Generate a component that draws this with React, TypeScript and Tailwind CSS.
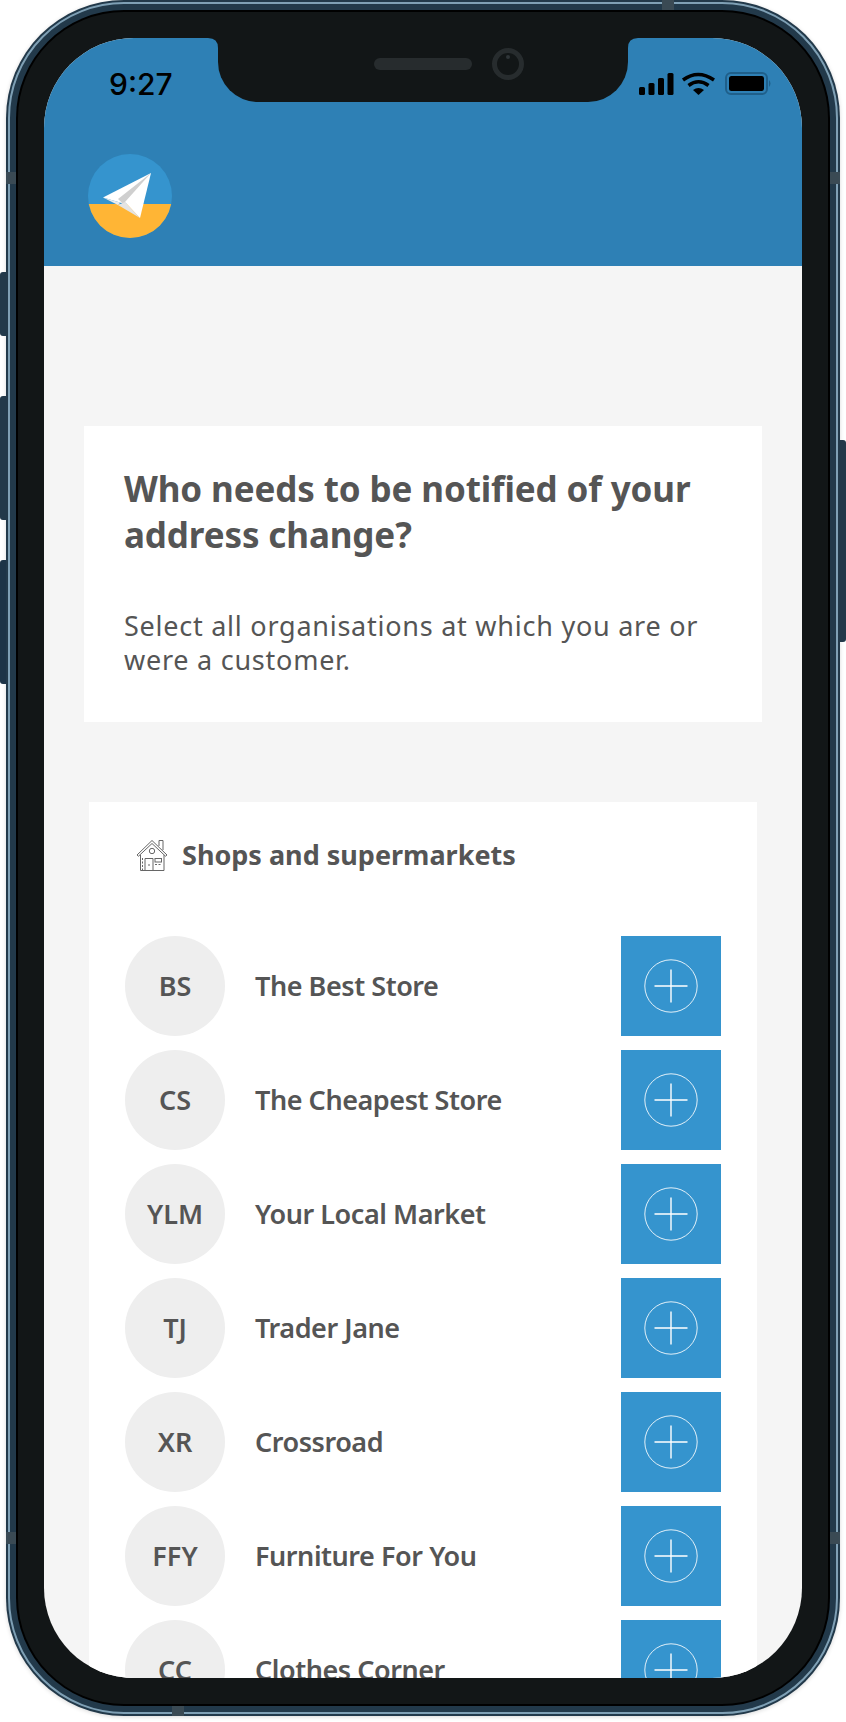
const rows = [
  ["BS", "The Best Store"],
  ["CS", "The Cheapest Store"],
  ["YLM", "Your Local Market"],
  ["TJ", "Trader Jane"],
  ["XR", "Crossroad"],
  ["FFY", "Furniture For You"],
  ["CC", "Clothes Corner"],
];

function Plus() {
  return (
    <svg width="56" height="56" viewBox="0 0 56 56" fill="none" stroke="#fff">
      <circle cx="28" cy="28" r="26.2" strokeWidth="1" opacity="0.85" />
      <path d="M28 11.5v33M11.5 28h33" strokeWidth="1.4" />
    </svg>
  );
}

function House() {
  return (
    <svg width="32" height="32" viewBox="0 0 32 32" fill="none" stroke="#666" strokeWidth="1">
      <path d="M1 16 16 1.5 31 16l-1.5 1.2L16 4.5 2.5 17.2Z" />
      <path d="M23 7V1.5h4V11" />
      <path d="M4.5 16v15.5h23.500V16" />
      <circle cx="16" cy="12" r="2.7" />
      <path d="M9 31.500V19.500h8v12M13 25v2" />
      <rect x="19" y="19.500" width="6.500" height="3.500" />
      <path d="M19 25.500h6.500M6.500 19v12" strokeDasharray="2 1.500" />
    </svg>
  );
}

function Logo() {
  return (
    <svg width="84" height="84" viewBox="0 0 84 84">
      <defs>
        <clipPath id="lg"><circle cx="42" cy="42" r="42" /></clipPath>
      </defs>
      <g clipPath="url(#lg)">
        <rect width="84" height="84" fill="#3594ce" />
        <rect y="50" width="84" height="34" fill="#ffb535" />
      </g>
      <path d="M63 19 15 43.500 37 50Z" fill="#fff" />
      <path d="M63 19 37 50l-22-6.500L30 51l4-4Z" fill="#ececec" />
      <path d="M63 19 30 45l7 6.500Z" fill="#cfcfcf" />
      <path d="M63 19 37 48l15 16Z" fill="#fff" />
      <path d="M37 48 30 51l22 13Z" fill="#e4e4e4" />
    </svg>
  );
}

function StatusIcons() {
  return (
    <svg width="135" height="24" viewBox="0 0 135 24">
      <rect x="0" y="15" width="6" height="8" rx="1.500" />
      <rect x="9.500" y="11" width="6" height="12" rx="1.500" />
      <rect x="19" y="6" width="6" height="17" rx="1.500" />
      <rect x="28.500" y="1" width="6" height="22" rx="1.500" />
      <path d="M44 8Q59-3 75 8" fill="none" stroke="#000" strokeWidth="3.500" />
      <path d="M49.500 13.500Q59.500 6 69.500 13.500" fill="none" stroke="#000" strokeWidth="3.500" />
      <path d="M54 18Q59.500 14 65 18L59.500 23Z" />
      <rect x="87" y="1" width="41" height="21" rx="5" fill="none" stroke="#1f5f8a" strokeWidth="2" />
      <rect x="90" y="4" width="35" height="15" rx="2.500" />
      <path d="M130 8q3 3.500 0 7Z" fill="#1f5f8a" />
    </svg>
  );
}

function Notch() {
  return (
    <div className="relative w-[410px] h-[64px] shrink-0 rounded-b-[40px] bg-[#121617] flex items-center gap-[20px] pl-[156px] pb-[12px]">
      <svg className="absolute left-[-10px] top-0" width="10" height="10" viewBox="0 0 10 10">
        <path d="M0 0Q10 0 10 10V0Z" fill="#121617" />
      </svg>
      <svg className="absolute right-[-10px] top-0" width="10" height="10" viewBox="0 0 10 10">
        <path d="M10 0Q0 0 0 10V0Z" fill="#121617" />
      </svg>
      <div className="w-[98px] h-[12px] rounded-full bg-[#272c2e]" />
      <div className="w-[32px] h-[32px] rounded-full border-[5px] border-[#272c2e] pl-[9px] pt-[2px]">
        <div className="w-[4px] h-[4px] rounded-full bg-[#2f3538]" />
      </div>
    </div>
  );
}

export default function App() {
  return (
    <div className="relative w-[846px] h-[1722px] bg-white overflow-hidden">
      <div className="ml-[6px] w-[834px] h-[1716px] rounded-[118px] bg-[#22394a] p-[2px] shadow-[0_1px_4px_rgba(0,0,0,0.15)]">
        <div className="h-full rounded-[116px] border-2 border-[#7fa0b5] p-[6px]">
          <div className="h-full rounded-[108px] bg-black p-[2px]">
            <div className="h-full rounded-[106px] bg-[#121617] p-[26px]">
              <div className="h-full rounded-[90px] overflow-hidden bg-[#f5f5f5] font-['Noto_Sans',sans-serif]">
                <header className="h-[228px] bg-[#2e80b5]">
                  <div className="flex h-[64px]">
                    <div className="w-[174px] shrink-0 pl-[65px] pt-[29px] text-[30px] leading-[34px] font-medium text-black font-['Inter',sans-serif]">9:27</div>
                    <Notch />
                    <div className="pl-[11px] pt-[34px]">
                      <StatusIcons />
                    </div>
                  </div>
                  <div className="pl-[44px] pt-[52px]">
                    <Logo />
                  </div>
                </header>

                <section className="mx-[40px] mt-[160px] bg-white px-[40px] pt-[40px] pb-[45px] text-[#555]">
                  <h1 className="text-[35px] leading-[46px] font-bold tracking-[-0.12px]">Who needs to be notified of your address change?</h1>
                  <p className="mt-[51px] text-[27px] leading-[34px] tracking-[0.75px]">Select all organisations at which you are or were a customer.</p>
                </section>

                <section className="mx-[45px] mt-[80px] bg-white px-[36px] pt-[35px] text-[#555]">
                  <div className="flex items-center h-[36px] pl-[11px] gap-[14px]">
                    <House />
                    <span className="text-[27px] leading-[36px] font-bold">Shops and supermarkets</span>
                  </div>
                  <div className="mt-[63px] flex flex-col gap-[14px]">
                    {rows.map(([a, b]) => (
                      <div key={a} className="flex items-center h-[100px] gap-[30px]">
                        <div className="w-[100px] h-[100px] rounded-full bg-[#eeeeee] flex items-center justify-center text-[27px] font-semibold">{a}</div>
                        <div className="flex-1 text-[27px] font-semibold tracking-[-0.45px]">{b}</div>
                        <div className="w-[100px] h-[100px] bg-[#3594ce] flex items-center justify-center">
                          <Plus />
                        </div>
                      </div>
                    ))}
                  </div>
                </section>
              </div>
            </div>
          </div>
        </div>
      </div>

      <div className="absolute left-0 top-[272px] w-[6px] h-[64px] rounded-l-[3px] bg-[#22394a]" />
      <div className="absolute left-0 top-[396px] w-[6px] h-[124px] rounded-l-[3px] bg-[#22394a]" />
      <div className="absolute left-0 top-[560px] w-[6px] h-[124px] rounded-l-[3px] bg-[#1d3447]" />
      <div className="absolute left-[839px] top-[440px] w-[7px] h-[202px] rounded-r-[3px] bg-[#22394a]" />

      <div className="absolute left-[6px] top-[172px] w-[10px] h-[12px] bg-[#3a4a54]" />
      <div className="absolute left-[830px] top-[172px] w-[10px] h-[12px] bg-[#3a4a54]" />
      <div className="absolute left-[6px] top-[1532px] w-[10px] h-[12px] bg-[#3a4a54]" />
      <div className="absolute left-[830px] top-[1532px] w-[10px] h-[12px] bg-[#3a4a54]" />
      <div className="absolute left-[662px] top-0 w-[12px] h-[10px] bg-[#3a4a54]" />
      <div className="absolute left-[172px] top-[1706px] w-[12px] h-[10px] bg-[#3a4a54]" />
    </div>
  );
}
